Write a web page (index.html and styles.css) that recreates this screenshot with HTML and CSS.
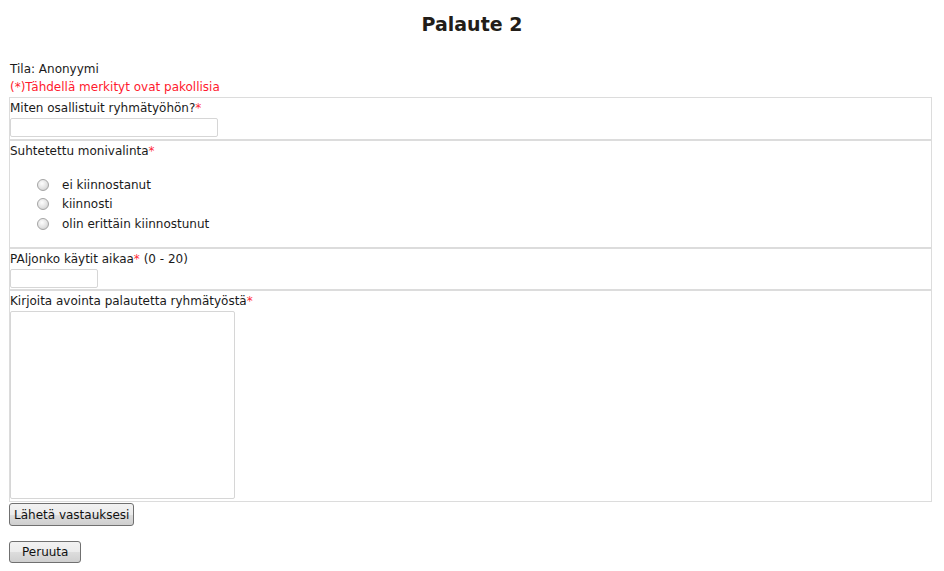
FILE: index.html
```html
<!DOCTYPE html>
<html lang="fi">
<head>
  <meta charset="UTF-8">
  <title>Palaute 2</title>
  <link rel="stylesheet" href="styles.css">
</head>
<body>
  <h1 class="title">Palaute 2</h1>

  <div class="status">Tila: Anonyymi</div>
  <div class="note">(*)Tähdellä merkityt ovat pakollisia</div>

  <form class="survey">
    <div class="question">
      <label class="q-label" for="q1">Miten osallistuit ryhmätyöhön?<span class="req">*</span></label>
      <input class="field field-wide" id="q1" type="text">
    </div>

    <div class="question question-choice">
      <div class="q-label">Suhtetettu monivalinta<span class="req">*</span></div>
      <ul class="choices">
        <li><input type="radio" name="q2" id="q2a"><label for="q2a">ei kiinnostanut</label></li>
        <li><input type="radio" name="q2" id="q2b"><label for="q2b">kiinnosti</label></li>
        <li><input type="radio" name="q2" id="q2c"><label for="q2c">olin erittäin kiinnostunut</label></li>
      </ul>
    </div>

    <div class="question question-tight">
      <label class="q-label" for="q3">PAljonko käytit aikaa<span class="req">*</span> (0 - 20)</label>
      <input class="field field-short" id="q3" type="text">
    </div>

    <div class="question">
      <label class="q-label" for="q4">Kirjoita avointa palautetta ryhmätyöstä<span class="req">*</span></label>
      <textarea class="field field-area" id="q4"></textarea>
    </div>

    <div class="actions">
      <button type="button" class="btn">Lähetä vastauksesi</button>
      <button type="button" class="btn btn-cancel">Peruuta</button>
    </div>
  </form>
</body>
</html>
```

FILE: styles.css
```css
* {
  margin: 0;
  box-sizing: border-box;
}

body {
  font-family: "DejaVu Sans", Verdana, sans-serif;
  font-size: 12px;
  color: #1a1a1a;
  background: #fff;
  padding: 0 9px;
}

.title {
  text-align: center;
  font-size: 19px;
  font-weight: bold;
  color: #221d18;
  padding-top: 12px;
  height: 60px;
  line-height: 24px;
}

.status {
  line-height: 18px;
  padding-left: 1px;
}

.note {
  color: #ff1a2e;
  line-height: 19px;
  padding-left: 1px;
}

.survey {
  width: 923px;
}

.question {
  border: 1px solid #dcdcdc;
  padding: 0 0 2px 0;
}

.question-tight {
  padding-bottom: 1px;
}

.q-label {
  display: block;
  line-height: 20px;
}

.req {
  color: #ff2a3a;
}

.field {
  display: block;
  border: 1px solid #d6d6d6;
  border-radius: 2px;
  font: inherit;
  background: #fff;
}

.field-wide {
  width: 208px;
  height: 19px;
}

.field-short {
  width: 88px;
  height: 19px;
}

.field-area {
  width: 225px;
  height: 188px;
  resize: none;
}

.question-choice {
  height: 108px;
}

.choices {
  list-style: none;
  padding: 14px 0 0 27px;
}

.choices li {
  display: flex;
  align-items: center;
  height: 19.5px;
}

.choices input {
  appearance: none;
  flex: none;
  width: 12px;
  height: 12px;
  margin: 0;
  border: 1px solid #a4a4a4;
  border-radius: 50%;
  background: radial-gradient(circle at 40% 35%, #fdfdfd, #e2e2e2 55%, #c4c4c4);
}

.choices label {
  margin-left: 13px;
}

.actions {
  display: flex;
  flex-direction: column;
  align-items: flex-start;
  gap: 15px;
  padding-top: 1px;
}

.btn {
  font: inherit;
  color: #111;
  height: 23px;
  padding: 0 4px;
  border: 1px solid #707070;
  border-radius: 3px;
  background: linear-gradient(#f2f2f2, #ebebeb 50%, #dddddd 51%, #cfcfcf);
}

.btn-cancel {
  height: 22px;
  padding: 0 12px;
}
```
